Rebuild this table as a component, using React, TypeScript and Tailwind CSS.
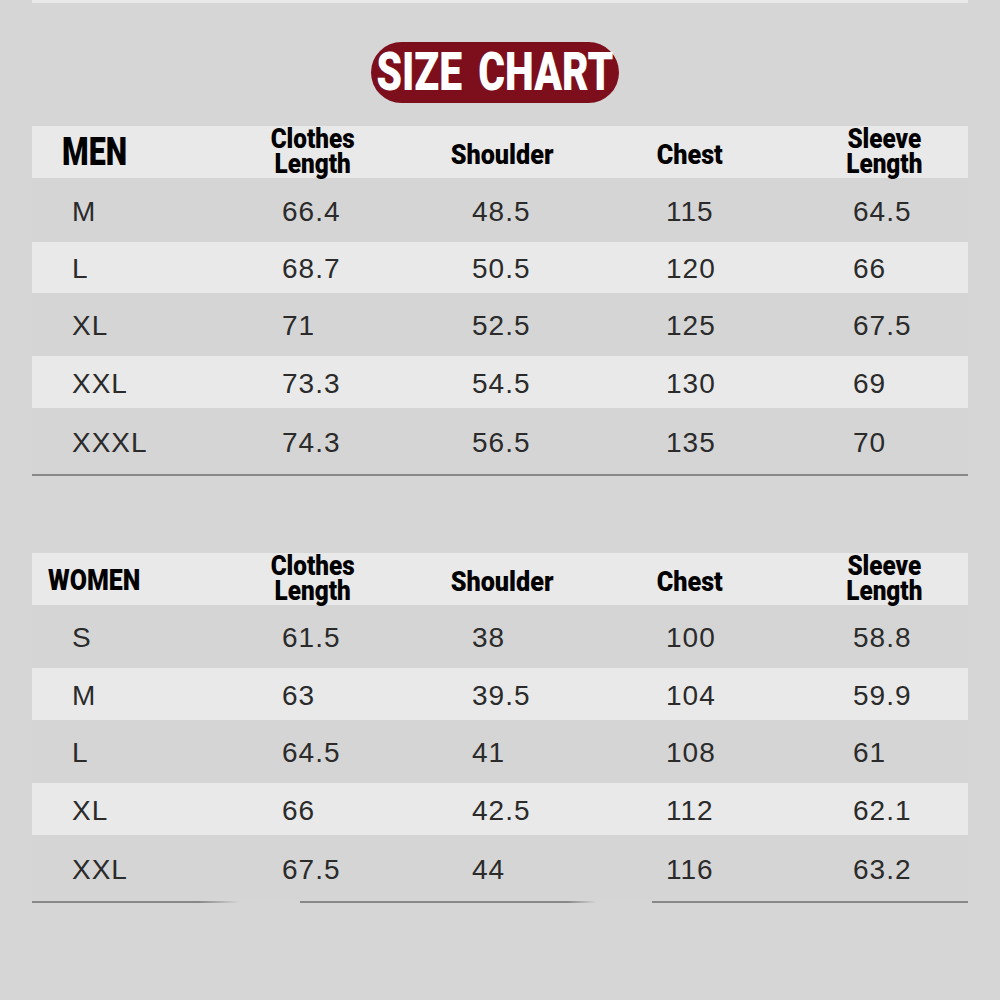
import React from "react";

type Row = { size: string; vals: string[]; h: string; light: boolean };

const menRows: Row[] = [
  { size: "M", vals: ["66.4", "48.5", "115", "64.5"], h: "h-[64px]", light: false },
  { size: "L", vals: ["68.7", "50.5", "120", "66"], h: "h-[51px]", light: true },
  { size: "XL", vals: ["71", "52.5", "125", "67.5"], h: "h-[63px]", light: false },
  { size: "XXL", vals: ["73.3", "54.5", "130", "69"], h: "h-[52px]", light: true },
  { size: "XXXL", vals: ["74.3", "56.5", "135", "70"], h: "h-[66px]", light: false },
];

const womenRows: Row[] = [
  { size: "S", vals: ["61.5", "38", "100", "58.8"], h: "h-[63px]", light: false },
  { size: "M", vals: ["63", "39.5", "104", "59.9"], h: "h-[52px]", light: true },
  { size: "L", vals: ["64.5", "41", "108", "61"], h: "h-[63px]", light: false },
  { size: "XL", vals: ["66", "42.5", "112", "62.1"], h: "h-[52px]", light: true },
  { size: "XXL", vals: ["67.5", "44", "116", "63.2"], h: "h-[66px]", light: false },
];

function TwoLine({ a, b }: { a: string; b: string }) {
  return (
    <div className="flex justify-center">
      <div className="inline-block scale-x-[0.9] text-center text-[27px] leading-[25px] font-black text-black">
        <div>{a}</div>
        <div>{b}</div>
      </div>
    </div>
  );
}

function OneLine({ t }: { t: string }) {
  return (
    <div className="flex justify-center pt-[6px]">
      <span className="inline-block scale-x-[0.9] text-[28px] leading-[30px] font-black text-black">{t}</span>
    </div>
  );
}

function Header({ title, men }: { title: string; men: boolean }) {
  return (
    <div className="mx-[32px] h-[52px] bg-[#e9e9e9] font-['Roboto',sans-serif]">
      <div className="grid h-full grid-cols-[186px_190px_188px_188px_200px] items-center">
        {men ? (
          <div className="pl-[30px]">
            <span className="inline-block origin-left scale-x-[0.8] text-[38px] leading-[40px] font-black text-black">{title}</span>
          </div>
        ) : (
          <div className="pl-[16px] pt-[4px]">
            <span className="inline-block origin-left scale-x-[0.86] text-[29px] leading-[30px] font-black text-black">{title}</span>
          </div>
        )}
        <TwoLine a="Clothes" b="Length" />
        <OneLine t="Shoulder" />
        <OneLine t="Chest" />
        <TwoLine a="Sleeve" b="Length" />
      </div>
    </div>
  );
}

function DataRow({ row }: { row: Row }) {
  return (
    <div
      className={`mx-[32px] ${row.h} ${row.light ? "bg-[#e9e9e9]" : "bg-[#d5d5d5]"} grid grid-cols-[250px_190px_194px_187px_115px] items-center pt-[3px] font-['Liberation_Sans',Arial,sans-serif] text-[28px] tracking-[1px] text-[#2b2b2b]`}
    >
      <div className="pl-[40px]">{row.size}</div>
      {row.vals.map((v, i) => (
        <div key={i}>{v}</div>
      ))}
    </div>
  );
}

export default function App() {
  return (
    <div className="h-[1000px] w-[1000px] overflow-hidden bg-[#d6d6d6]">
      <div className="mx-[32px] h-[3px] bg-[#e9e9e9]" />

      <div className="mt-[39px] flex justify-center pr-[10px]">
        <div className="flex h-[61px] w-[248px] items-center justify-center overflow-visible rounded-full bg-[#7c0f1b]">
          <span className="inline-block shrink-0 scale-x-[0.77] whitespace-nowrap font-['Roboto',sans-serif] text-[53px] leading-[53px] font-black text-white [word-spacing:8px]">
            SIZE CHART
          </span>
        </div>
      </div>

      <div className="mt-[23px]">
        <Header title="MEN" men />
        {menRows.map((r) => (
          <DataRow key={r.size} row={r} />
        ))}
        <div className="mx-[32px] h-[2px] bg-[#888888]" />
      </div>

      <div className="mt-[77px]">
        <Header title="WOMEN" men={false} />
        {womenRows.map((r) => (
          <DataRow key={r.size} row={r} />
        ))}
        <div className="mx-[32px] flex h-[2px]">
          <div className="w-[208px] bg-gradient-to-r from-[#888888] from-80% to-transparent" />
          <div className="ml-[60px] w-[297px] bg-gradient-to-r from-[#888888] from-90% to-transparent" />
          <div className="ml-[55px] flex-1 bg-[#888888]" />
        </div>
      </div>
    </div>
  );
}
